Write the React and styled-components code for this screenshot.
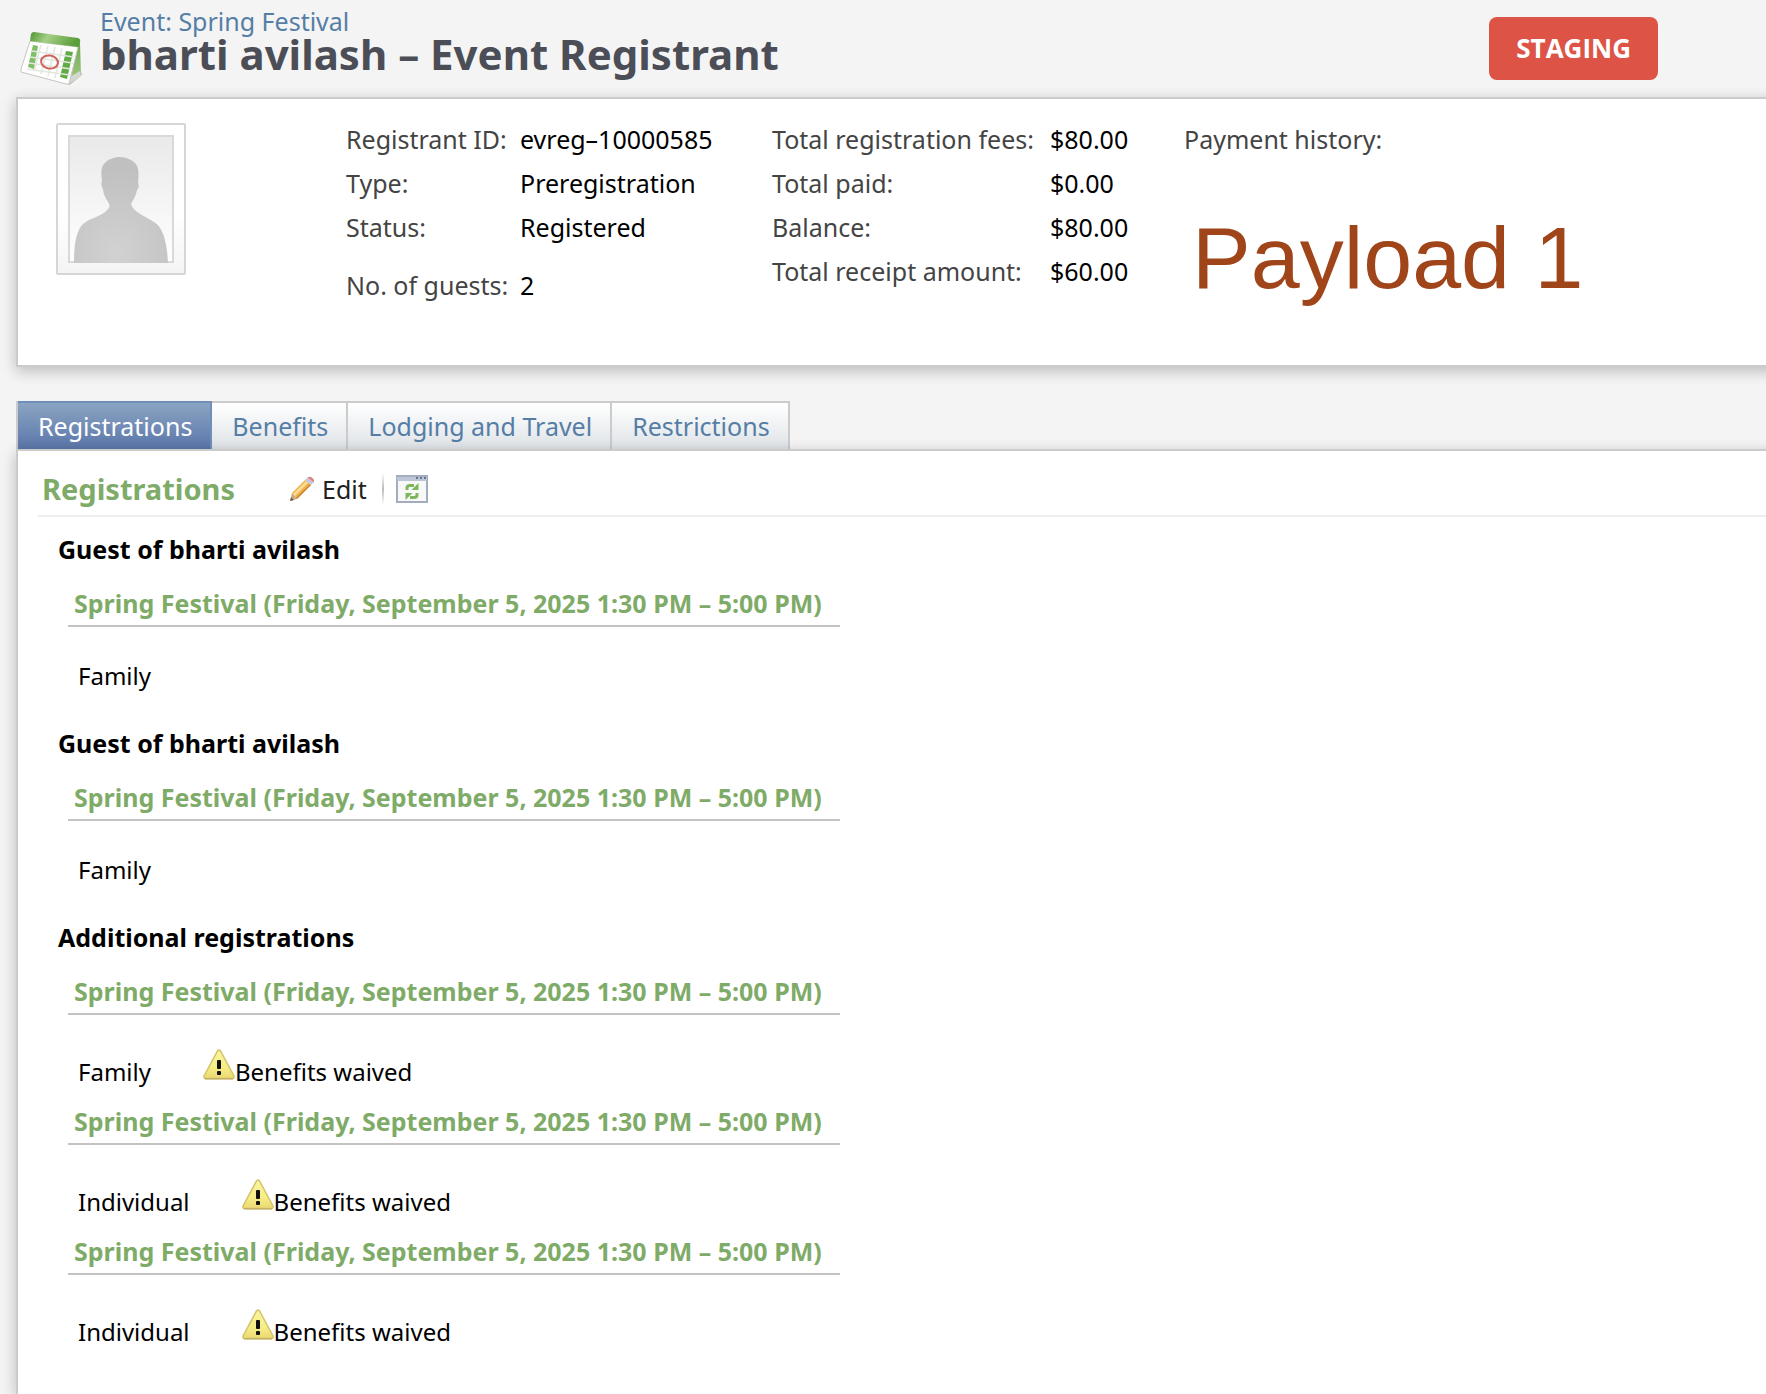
import React from "react";
import styled, { createGlobalStyle, css } from "styled-components";

const sans = '"Noto Sans", "Open Sans", "DejaVu Sans", sans-serif';

const GlobalStyle = createGlobalStyle`
  *, *::before, *::after { box-sizing: border-box; }
  body {
    margin: 0;
    background: #f4f4f4;
    color: #000;
    font: 400 25px/30px ${sans};
    overflow-x: hidden;
  }
  h1, h2, h3, h4, dl, dd, p, ul { margin: 0; padding: 0; }
  a { color: inherit; text-decoration: none; }
  button { font: inherit; border: 0; background: none; padding: 0; cursor: pointer; }
  svg { display: block; flex: none; }
`;

const Page = styled.div`
  display: flex;
  flex-direction: column;
  min-height: 100vh;
  padding-left: 16px;
  overflow: hidden;
`;

const Header = styled.header`
  display: flex;
  align-items: flex-start;
  height: 97px;
  padding: 9px 108px 0 4px;
`;

const HeaderIcon = styled.div`
  width: 80px;
  padding-top: 22px;
`;

const Heading = styled.div`
  flex: 1;
  white-space: nowrap;
`;

const EventLink = styled.a`
  display: block;
  line-height: 25px;
  && { color: #557ea6; }
`;

const Title = styled.h1`
  color: #4b4e57;
  font-size: 42px;
  line-height: 40px;
  font-weight: 700;
`;

const Badge = styled.strong`
  margin-top: 8px;
  padding: 0 27px;
  border-radius: 8px;
  background: #dd5447;
  color: #fff;
  font: 700 26px/63px "Open Sans", "Noto Sans", sans-serif;
`;

/* Panels run past the right edge of the window, so only their left side shows. */
const panel = css`
  margin-right: -20px;
  background: #fff;
  border: 2px solid #cbcbcb;
  border-right: 0;
  box-shadow: 0 4px 14px rgba(0, 0, 0, 0.24);
`;

const Summary = styled.section`
  ${panel}
  display: grid;
  grid-template-columns: 290px 426px 412px 1fr;
  padding: 18px 0 58px 38px;
`;

const Photo = styled.div`
  padding-top: 6px;
`;

const Facts = styled.dl`
  display: grid;
  grid-template-columns: ${(p) => p.$label}px auto;
  align-content: start;
  line-height: 44px;
  white-space: nowrap;
`;

const Term = styled.dt`
  color: #444;
  ${(p) => p.$spaced && "margin-top: 14px;"}
`;

const Value = styled.dd`
  ${(p) => p.$spaced && "margin-top: 14px;"}
`;

const Payment = styled.div`
  color: #444;
  line-height: 44px;
  white-space: nowrap;
`;

const Payload = styled.p`
  margin-top: 52px;
  padding-left: 8px;
  color: #a0441a;
  font: 400 88px/90px "Liberation Sans", Arial, sans-serif;
`;

const Tabs = styled.div`
  display: flex;
  margin-top: 34px;
  border-left: 2px solid #cbcbcb;
`;

const Tab = styled.button`
  height: 48px;
  && {
    padding: 0 18px 1px 20px;
    border-top: 2px solid #cbcbcb;
    border-right: 2px solid #cbcbcb;
    background: linear-gradient(#fff, #dfe3e7);
    color: #557ea6;
  }
  ${(p) =>
    p.$active &&
    css`
      && {
        border-color: #6f8fba;
        background: linear-gradient(#8ba4c2, #5a76aa);
        color: #fff;
      }
    `}
`;

const Content = styled.main`
  ${panel}
  flex: 1;
  border-bottom: 0;
  padding: 0 0 45px 20px;
`;

const Toolbar = styled.div`
  display: flex;
  align-items: center;
  height: 66px;
  padding: 12px 0 0 4px;
  border-bottom: 2px solid #eee;
`;

const SectionTitle = styled.h2`
  width: 246px;
  color: #7fab68;
  font-size: 29px;
  font-weight: 700;
`;

const ToolButton = styled.button`
  display: flex;
  align-items: center;
  gap: 6px;
  color: #222;
`;

const Separator = styled.span`
  width: 2px;
  height: 32px;
  margin: 0 12px 0 15px;
  background: linear-gradient(#fff, #bbb, #fff);
`;

const Group = styled.section`
  padding-left: 20px;
  margin-top: ${(p) => (p.$first ? 17 : 37)}px;
`;

const GroupTitle = styled.h3`
  font-size: 25px;
  font-weight: 700;
`;

const EventTitle = styled.h4`
  width: 772px;
  margin: ${(p) => (p.$first ? 24 : 19)}px 0 34px 10px;
  padding: 0 0 7px 6px;
  border-bottom: 2px solid #c3c3c3;
  color: #7fab68;
  font-size: 25px;
  font-weight: 700;
  white-space: nowrap;
`;

const Registration = styled.div`
  display: flex;
  align-items: flex-end;
  gap: 52px;
  height: ${(p) => (p.$waived ? 38 : 30)}px;
  padding-left: 20px;
  font-size: 24px;
`;

const Waived = styled.span`
  display: flex;
  align-items: flex-end;
  height: 38px;
  svg { align-self: flex-start; }
`;

const CalendarIcon = () => (
  <svg width="64" height="56" viewBox="0 0 64 56" aria-hidden="true">
    <defs>
      <linearGradient id="calTop" x1="0" y1="0" x2="1" y2="0.2">
        <stop offset="0" stopColor="#4d9430" />
        <stop offset=".4" stopColor="#a5cf86" />
        <stop offset="1" stopColor="#5a9f3b" />
      </linearGradient>
      <linearGradient id="calSide" x1="0" y1="0" x2="0" y2="1">
        <stop offset="0" stopColor="#6aa84a" />
        <stop offset="1" stopColor="#a6cb8c" />
      </linearGradient>
    </defs>
    <path d="M50 54L63 43L58 40L20 46Z" fill="#000" opacity=".18" />
    <path d="M60 11L61 45L48 53L56 15Z" fill="url(#calSide)" />
    <path d="M60 40L61 45L48 53L50 46Z" fill="#d4d8d0" />
    <path d="M10 10L58 16L49 53L46 53L1 41V38Z" fill="#fff" stroke="#c4c8c0" />
    <path d="M11 3Q12 1 14 1L58 7Q61 8 60 11L59 16L10 10Z" fill="url(#calTop)" />
    <path d="M13 14L18 15L14 38L8 36Z" fill="#7fbd66" />
    <path d="M46 20L53 21L47 48L40 46Z" fill="#62aa46" />
    <path
      d="M21 14L14 40M28 15L21 43M35 16L28 45M42 17L35 47M12 20L54 26M10 26L53 32M9 32L51 38M7 38L50 44"
      fill="none"
      stroke="#e2e7df"
      strokeWidth="1.500"
    />
    <ellipse cx="29.500" cy="31" rx="8.500" ry="6.500" fill="none" stroke="#d2625e" strokeWidth="2" transform="rotate(10 29.500 31)" />
  </svg>
);

const Portrait = () => (
  <svg width="130" height="152" viewBox="0 0 130 152" role="img" aria-label="Registrant photo">
    <defs>
      <linearGradient id="frame" x1="0" y1="0" x2="0" y2="1">
        <stop offset=".6" stopColor="#fff" />
        <stop offset="1" stopColor="#f4f4f4" />
      </linearGradient>
      <linearGradient id="backdrop" x1="0" y1="0" x2="0" y2="1">
        <stop offset="0" stopColor="#e9e9e9" />
        <stop offset="1" stopColor="#fff" />
      </linearGradient>
      <radialGradient id="person" cx=".45" cy=".9" r=".8">
        <stop offset="0" stopColor="#d2d2d2" />
        <stop offset="1" stopColor="#c0c0c0" />
      </radialGradient>
    </defs>
    <rect x="1" y="1" width="128" height="150" rx="1" fill="url(#frame)" stroke="#d6d6d6" strokeWidth="2" />
    <rect x="13" y="13" width="104" height="126" fill="url(#backdrop)" stroke="#d9d9d9" strokeWidth="2" />
    <path
      d="M18 140C18 122 20 108 27 101C34 95 47 93 52 86C54 84 54 82 52 79C49 74 47 70 47 66C45 63 45 60 46 58C45 50 45 44 48 41C52 36 58 34 64 34C70 34 76 37 79 40C83 44 83 51 82 59C83 62 83 65 81 67C80 73 77 77 75 81C76 88 90 94 98 99C108 105 111 121 112 140Z"
      fill="url(#person)"
    />
  </svg>
);

const PencilIcon = () => (
  <svg width="28" height="28" viewBox="0 0 28 28" aria-hidden="true">
    <path d="M2 26L4 18L9 24Z" fill="#c9a983" />
    <path d="M2 26L3 22.500L6 25Z" fill="#6b5b4b" />
    <path d="M4 18L17 5L23 10L9 24Z" fill="#f0b14c" />
    <path d="M5 19L18 6L20 8L7 21Z" fill="#fbdc96" />
    <path d="M8 23L22 9L23 10L9 24Z" fill="#c88432" />
    <path d="M17 5L19.500 2.500L25.500 7.500L23 10Z" fill="#c3cbdb" />
    <path d="M19.500 2.500Q21.500 1 24 2.500Q27 5 25.500 7.500Z" fill="#d9838a" />
  </svg>
);

const RefreshIcon = () => (
  <svg width="32" height="28" viewBox="0 0 32 28" aria-hidden="true">
    <rect x="1" y="1" width="30" height="26" fill="#f8f8f8" stroke="#a3adbd" strokeWidth="2" />
    <path d="M1 2H31V6H1Z" fill="#bcc6d6" />
    <path d="M20 3h2M24 3h2M28 3h2" stroke="#68758c" strokeWidth="2" />
    <path d="M11 15V13Q11 10.500 14 10.500H18M21 18V20Q21 22.500 18 22.500H14" fill="none" stroke="#7cb75b" strokeWidth="3" />
    <path d="M22.500 8V15H15.500Z M9.500 25V18H16.500Z" fill="#7cb75b" />
  </svg>
);

const WarningIcon = () => (
  <svg width="32" height="31" viewBox="0 0 32 31" aria-hidden="true">
    <defs>
      <linearGradient id="warn" x1="0" y1="0" x2="0" y2="1">
        <stop offset="0" stopColor="#faf5a0" />
        <stop offset=".6" stopColor="#f6ee86" />
        <stop offset="1" stopColor="#ecd873" />
      </linearGradient>
    </defs>
    <path d="M14.500 2Q16 0 17.500 2L31 27Q31.500 29.500 29.500 29.500H2.500Q.5 29.500 1 27Z" fill="url(#warn)" stroke="#d3c36c" strokeWidth="1.500" />
    <path d="M2 29.800H30" stroke="#c3b165" strokeWidth="1.500" />
    <rect x="14" y="11" width="4" height="9" rx="1" fill="#111" />
    <rect x="14" y="22" width="4" height="4" rx="1" fill="#111" />
  </svg>
);

const EVENT = "Spring Festival (Friday, September 5, 2025 1:30 PM – 5:00 PM)";

const groups = [
  { title: "Guest of bharti avilash", items: [{ type: "Family" }] },
  { title: "Guest of bharti avilash", items: [{ type: "Family" }] },
  {
    title: "Additional registrations",
    items: [
      { type: "Family", waived: true },
      { type: "Individual", waived: true },
      { type: "Individual", waived: true },
    ],
  },
];

const registrant = [
  ["Registrant ID:", "evreg–10000585"],
  ["Type:", "Preregistration"],
  ["Status:", "Registered"],
  ["No. of guests:", "2", true],
];

const totals = [
  ["Total registration fees:", "$80.00"],
  ["Total paid:", "$0.00"],
  ["Balance:", "$80.00"],
  ["Total receipt amount:", "$60.00"],
];

const tabs = ["Registrations", "Benefits", "Lodging and Travel", "Restrictions"];

const FactList = ({ rows, label }) => (
  <Facts $label={label}>
    {rows.map(([term, value, spaced]) => (
      <React.Fragment key={term}>
        <Term $spaced={spaced}>{term}</Term>
        <Value $spaced={spaced}>{value}</Value>
      </React.Fragment>
    ))}
  </Facts>
);

export default function App() {
  return (
    <Page>
      <GlobalStyle />
      <Header>
        <HeaderIcon>
          <CalendarIcon />
        </HeaderIcon>
        <Heading>
          <EventLink href="#event">Event: Spring Festival</EventLink>
          <Title>bharti avilash – Event Registrant</Title>
        </Heading>
        <Badge>STAGING</Badge>
      </Header>

      <Summary>
        <Photo>
          <Portrait />
        </Photo>
        <FactList rows={registrant} label={174} />
        <FactList rows={totals} label={278} />
        <Payment>
          Payment history:
          <Payload>Payload 1</Payload>
        </Payment>
      </Summary>

      <Tabs role="tablist">
        {tabs.map((name, i) => (
          <Tab key={name} type="button" role="tab" aria-selected={i === 0} $active={i === 0}>
            {name}
          </Tab>
        ))}
      </Tabs>

      <Content>
        <Toolbar>
          <SectionTitle>Registrations</SectionTitle>
          <ToolButton type="button">
            <PencilIcon />
            Edit
          </ToolButton>
          <Separator />
          <ToolButton type="button" aria-label="Refresh">
            <RefreshIcon />
          </ToolButton>
        </Toolbar>
        {groups.map((group, g) => (
          <Group key={g} $first={g === 0}>
            <GroupTitle>{group.title}</GroupTitle>
            {group.items.map((item, i) => (
              <React.Fragment key={i}>
                <EventTitle $first={i === 0}>{EVENT}</EventTitle>
                <Registration $waived={item.waived}>
                  <span>{item.type}</span>
                  {item.waived && (
                    <Waived>
                      <WarningIcon />
                      Benefits waived
                    </Waived>
                  )}
                </Registration>
              </React.Fragment>
            ))}
          </Group>
        ))}
      </Content>
    </Page>
  );
}
